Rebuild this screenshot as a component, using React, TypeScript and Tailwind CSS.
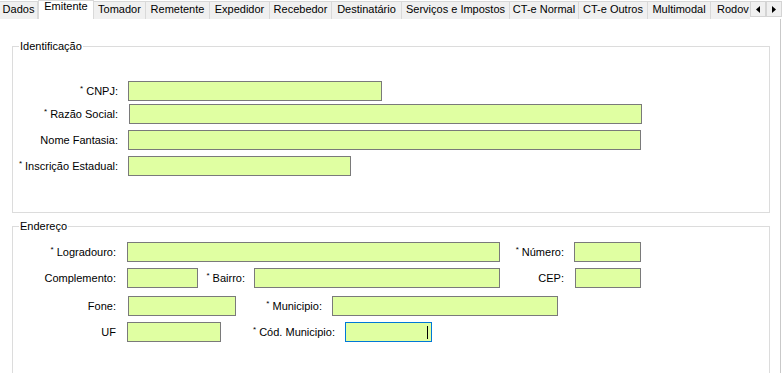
import React from "react";

type Tab = { label: string; cls: string; active?: boolean };

const tabs: Tab[] = [
  { label: "Dados", cls: "w-[38px]" },
  { label: "Emitente", cls: "w-[56px]", active: true },
  { label: "Tomador", cls: "w-[52px]" },
  { label: "Remetente", cls: "w-[64px]" },
  { label: "Expedidor", cls: "w-[60px]" },
  { label: "Recebedor", cls: "w-[62px]" },
  { label: "Destinatário", cls: "w-[70px]" },
  { label: "Serviços e Impostos", cls: "w-[108px]" },
  { label: "CT-e Normal", cls: "w-[69px]" },
  { label: "CT-e Outros", cls: "w-[69px]" },
  { label: "Multimodal", cls: "w-[63px]" },
];

function Field({ cls, focused }: { cls: string; focused?: boolean }) {
  return (
    <div
      className={`h-[20px] shrink-0 border bg-[#e0ffa2] ${
        focused ? "border-[#0078d7] flex items-center justify-end pr-[3px]" : "border-[#7a7a7a]"
      } ${cls}`}
    >
      {focused && <span className="block h-[13px] w-px bg-black" />}
    </div>
  );
}

function Label({ cls, req, text }: { cls: string; req?: boolean; text: string }) {
  return (
    <span className={`shrink-0 whitespace-nowrap text-right ${cls}`}>
      {req && <span className="mr-[3px] align-top text-[8px] leading-[11px]">*</span>}
      {text}
    </span>
  );
}

function Arrow({ dir }: { dir: "left" | "right" }) {
  return (
    <div className="flex h-[16px] w-[16px] items-center justify-center border border-[#d4d4d4] bg-[#f0f0f0]">
      <svg width="4" height="7" viewBox="0 0 4 7">
        {dir === "left" ? <path d="M4 0 L0 3.5 L4 7 Z" fill="#000" /> : <path d="M0 0 L4 3.5 L0 7 Z" fill="#000" />}
      </svg>
    </div>
  );
}

export default function App() {
  return (
    <div className="h-[373px] w-[784px] overflow-hidden bg-white font-['Liberation_Sans',Arial,sans-serif] text-[11px] text-black">
      {/* tab strip */}
      <div className="flex h-[19px] items-start">
        {tabs.map((t) =>
          t.active ? (
            <div
              key={t.label}
              className={`h-[19px] shrink-0 border-x border-t border-[#d9d9d9] bg-white text-center leading-[11px] ${t.cls}`}
            >
              {t.label}
            </div>
          ) : (
            <div
              key={t.label}
              className={`mt-[1px] h-[18px] shrink-0 border-r border-t border-[#d9d9d9] bg-[#f0f0f0] pt-[2px] text-center leading-[11px] whitespace-nowrap ${t.cls}`}
            >
              {t.label}
            </div>
          )
        )}
        <div className="mt-[1px] h-[18px] w-[39px] shrink-0 whitespace-nowrap border-t border-[#d9d9d9] bg-[#f0f0f0] pl-[6px] pt-[2px] leading-[11px]">
          Rodov
        </div>
        <div className="mt-[1px] flex shrink-0">
          <Arrow dir="left" />
          <Arrow dir="right" />
        </div>
      </div>

      {/* tab page */}
      <div className="h-[354px] w-[781px] border-r border-[#c9c9c9] pt-[21px]">
        <fieldset className="ml-[12px] w-[758px] border border-[#dcdcdc] pb-[36px]">
          <legend className="ml-[6px] px-[1px] leading-[13px]">Identificação</legend>
          <div className="mt-[28px] flex h-[20px] items-center">
            <Label cls="w-[105px]" req text="CNPJ:" />
            <Field cls="ml-[10px] w-[254px]" />
          </div>
          <div className="mt-[3px] flex h-[20px] items-center">
            <Label cls="w-[105px]" req text="Razão Social:" />
            <Field cls="ml-[11px] w-[513px]" />
          </div>
          <div className="mt-[6px] flex h-[20px] items-center">
            <Label cls="w-[105px]" text="Nome Fantasia:" />
            <Field cls="ml-[10px] w-[513px]" />
          </div>
          <div className="mt-[6px] flex h-[20px] items-center">
            <Label cls="w-[105px]" req text="Inscrição Estadual:" />
            <Field cls="ml-[10px] w-[223px]" />
          </div>
        </fieldset>

        <fieldset className="ml-[12px] mt-[7px] w-[758px] border border-[#dcdcdc] pb-[40px]">
          <legend className="ml-[6px] px-[1px] leading-[13px]">Endereço</legend>
          <div className="mt-[9px] flex h-[20px] items-center">
            <Label cls="w-[103px]" req text="Logradouro:" />
            <Field cls="ml-[11px] w-[373px]" />
            <Label cls="w-[64px]" req text="Número:" />
            <Field cls="ml-[10px] w-[67px]" />
          </div>
          <div className="mt-[6px] flex h-[20px] items-center">
            <Label cls="w-[103px]" text="Complemento:" />
            <Field cls="ml-[11px] w-[71px]" />
            <Label cls="w-[47px]" req text="Bairro:" />
            <Field cls="ml-[9px] w-[246px]" />
            <Label cls="w-[64px]" text="CEP:" />
            <Field cls="ml-[11px] w-[66px]" />
          </div>
          <div className="mt-[8px] flex h-[20px] items-center">
            <Label cls="w-[103px]" text="Fone:" />
            <Field cls="ml-[12px] w-[108px]" />
            <Label cls="w-[86px]" req text="Municipio:" />
            <Field cls="ml-[10px] w-[226px]" />
          </div>
          <div className="mt-[6px] flex h-[20px] items-center">
            <Label cls="w-[103px]" text="UF" />
            <Field cls="ml-[11px] w-[94px]" />
            <Label cls="w-[114px]" req text="Cód. Municipio:" />
            <Field cls="ml-[10px] w-[87px]" focused />
          </div>
        </fieldset>
      </div>
    </div>
  );
}
